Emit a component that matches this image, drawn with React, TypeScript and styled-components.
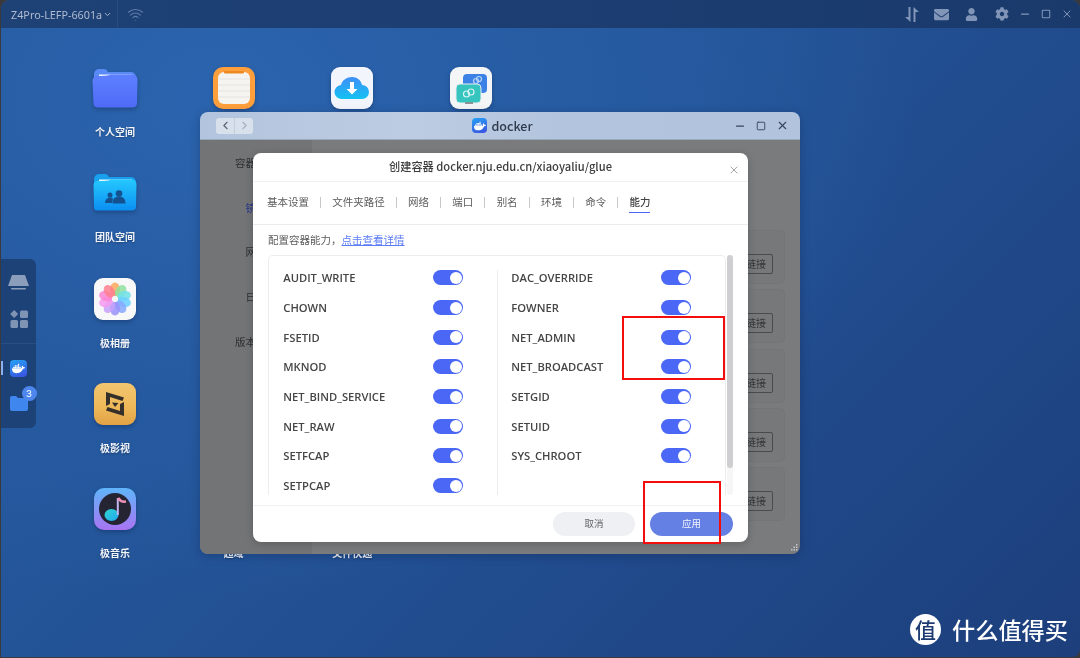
import React from "react";
import styled, { createGlobalStyle } from "styled-components";
import { SiDocker } from "react-icons/si";
import { FaCog, FaEnvelope, FaUser } from "react-icons/fa";
import { Wifi, ChevronDown, ChevronLeft, ChevronRight, Minus, Square, X } from "lucide-react";

const Global = createGlobalStyle`
  html, body { margin: 0; padding: 0; background: #3a3a3c; }
  * { box-sizing: border-box; }
  body { font-family: "Noto Sans CJK SC", "Noto Sans", sans-serif; }
`;

const Screen = styled.div`
  position: relative;
  width: 1080px;
  height: 658px;
  overflow: hidden;
  padding: 0 0 1px 1px;
  background: #3a3a3c;
  filter: blur(0.35px);
`;
const Panel = styled.div`
  position: relative;
  height: 100%;
  display: flex;
  flex-direction: column;
  border-radius: 9px 9px 8px 0;
  overflow: hidden;
  background: radial-gradient(ellipse 700px 500px at 20% 15%, #2b64ae 0%, #265aa0 60%, transparent 100%),
    linear-gradient(135deg, #2860a8 0%, #214d8f 60%, #1d3f7c 100%);
`;
const TopBar = styled.div`
  height: 28px;
  flex: none;
  display: flex;
  align-items: center;
  background: linear-gradient(90deg, #1e4176, #1a3a6c);
  color: #aebbd0;
`;
const HostSection = styled.div`
  width: 117px;
  height: 100%;
  display: flex;
  align-items: center;
  gap: 1px;
  padding-left: 10px;
  font: 400 10.8px "Noto Sans", sans-serif;
  border-right: 1px solid #2a4c80;
  white-space: nowrap;
`;
const WifiSlot = styled.div`
  margin-left: 9px;
  display: flex;
  color: #5d7ca8;
`;
const TopActions = styled.div`
  margin-left: auto;
  display: flex;
  gap: 9px;
  margin-right: 2px;
  color: #8095b7;
`;
const WindowActions = styled.div`
  display: flex;
  margin-right: 3px;
  color: #8095b7;
`;
const TopSlot = styled.div`
  width: 21px;
  height: 21px;
  display: flex;
  align-items: center;
  justify-content: center;
`;
const Desktop = styled.div`
  flex: 1;
  display: grid;
  grid-template-columns: repeat(4, 118.7px);
  grid-template-rows: repeat(5, 105.25px);
  padding: 39px 0 0 54.6px;
`;
const Shortcut = styled.div<{ $col: number; $row: number }>`
  grid-column: ${(p) => p.$col};
  grid-row: ${(p) => p.$row};
  display: flex;
  flex-direction: column;
  align-items: center;
`;
const ShortcutIcon = styled.div`
  width: 46px;
  height: 42px;
  display: flex;
  justify-content: center;
  filter: drop-shadow(0 2px 2px rgba(10, 30, 70, 0.35));
`;
const ShortcutLabel = styled.div`
  margin-top: 17px;
  font-size: 10px;
  line-height: 12px;
  font-weight: 700;
  color: #f1f4f9;
  text-shadow: 0 1px 2px rgba(0, 0, 0, 0.3);
`;

const Dock = styled.div`
  position: absolute;
  left: 0;
  top: 259px;
  width: 35px;
  height: 169px;
  border-radius: 0 6px 6px 0;
  background: #1d4278;
  display: flex;
  flex-direction: column;
  align-items: center;
`;
const DockSlot = styled.div<{ $h: number }>`
  position: relative;
  height: ${(p) => p.$h}px;
  display: flex;
  align-items: center;
  justify-content: center;
`;
const DockRule = styled.div`
  width: 100%;
  height: 1px;
  margin-top: 13px;
  background: #2a4d82;
`;
const DockBadge = styled.span`
  position: absolute;
  top: -6px;
  right: -9px;
  width: 15px;
  height: 15px;
  border-radius: 50%;
  background: #4d86ec;
  color: #e8f0ff;
  font: 500 9.5px/15px "Inter", sans-serif;
  text-align: center;
`;
const DockMarker = styled.span`
  position: absolute;
  left: 0;
  top: 102px;
  width: 2px;
  height: 14px;
  background: #8fb0ee;
`;
const DockerTile = styled.div<{ $size: number }>`
  width: ${(p) => p.$size}px;
  height: ${(p) => p.$size}px;
  border-radius: 4px;
  background: linear-gradient(160deg, #25a3f5, #3b4de0);
  color: #fff;
  display: flex;
  align-items: center;
  justify-content: center;
`;

const Win = styled.div`
  position: absolute;
  left: 199px;
  top: 112px;
  width: 600px;
  height: 442px;
  border-radius: 8px;
  overflow: hidden;
  display: flex;
  flex-direction: column;
  box-shadow: 0 2px 10px rgba(8, 20, 50, 0.25);
`;
const WinBar = styled.div`
  height: 28px;
  flex: none;
  display: grid;
  grid-template-columns: 1fr auto 1fr;
  align-items: center;
  padding: 0 11px 0 16px;
  background: linear-gradient(90deg, #b3c4de, #bccce2 35%, #b3c4de 60%, #b2c3dd);
  border-bottom: 1px solid #9aa8bc;
`;
const NavGroup = styled.div`
  width: 37px;
  height: 16px;
  display: flex;
  background: #d8e0ec;
  border-radius: 3px;
  color: #5b6572;
`;
const NavButton = styled.div<{ $muted?: boolean }>`
  flex: 1;
  display: flex;
  align-items: center;
  justify-content: center;
  color: ${(p) => (p.$muted ? "#a5afbd" : "#59626f")};
  & + & { border-left: 1px solid #c3cddc; }
`;
const WinTitle = styled.div`
  display: flex;
  align-items: center;
  gap: 4px;
  font: 500 12.5px "Noto Sans CJK SC", "Noto Sans", sans-serif;
  color: #2f3a4c;
`;
const WinControls = styled.div`
  justify-self: end;
  display: flex;
  gap: 7px;
  color: #36455c;
`;
const WinControl = styled.div`
  width: 14px;
  height: 14px;
  display: flex;
  align-items: center;
  justify-content: center;
`;
const WinBody = styled.div`
  flex: 1;
  display: flex;
  background: #7a7b7d;
`;
const Sidebar = styled.div`
  width: 112px;
  background: #737476;
`;
const SideItem = styled.div<{ $active?: boolean }>`
  height: 44.7px;
  display: flex;
  align-items: center;
  justify-content: center;
  font-size: 10.5px;
  color: ${(p) => (p.$active ? "#28368a" : "#2e2f31")};
`;
const CardList = styled.div`
  flex: 1;
  display: flex;
  flex-direction: column;
  gap: 5.3px;
  padding: 90px 15px 0 0;
`;
const Card = styled.div`
  height: 54px;
  display: flex;
  justify-content: flex-end;
  align-items: flex-end;
  padding: 0 11px 9px 0;
  background: #77787a;
  border: 1px solid #747577;
  border-radius: 5px;
`;
const LinkButton = styled.div`
  width: 60px;
  height: 20px;
  border: 1px solid #4a4b4d;
  border-radius: 2px;
  font-size: 10px;
  line-height: 18px;
  padding-left: 32px;
  color: #343537;
  white-space: nowrap;
`;
const Grip = styled.svg`
  position: absolute;
  right: 2px;
  bottom: 3px;
`;

const Modal = styled.div`
  position: absolute;
  left: 53px;
  top: 41px;
  width: 495px;
  height: 389px;
  border-radius: 8px;
  background: #fff;
  display: flex;
  flex-direction: column;
  box-shadow: 0 2px 8px rgba(0, 0, 0, 0.2);
`;
const ModalHeader = styled.div`
  position: relative;
  height: 29px;
  flex: none;
  display: flex;
  align-items: center;
  justify-content: center;
  padding-bottom: 2px;
  border-bottom: 1px solid #f0f0f2;
  font-size: 11.2px;
  font-weight: 500;
  color: #3c3c3c;
`;
const ModalClose = styled.div`
  position: absolute;
  right: 8px;
  top: 11px;
  color: #9a9a9a;
  display: flex;
`;
const Tabs = styled.div`
  height: 43px;
  flex: none;
  display: flex;
  align-items: center;
  gap: 11.15px;
  padding: 0 0 2px 14px;
  border-bottom: 1px solid #ececee;
`;
const Tab = styled.div<{ $active?: boolean }>`
  position: relative;
  font-size: 10.5px;
  line-height: 16px;
  color: ${(p) => (p.$active ? "#444" : "#5c5c5c")};
  font-weight: ${(p) => (p.$active ? 500 : 400)};
  &::after {
    content: "";
    display: ${(p) => (p.$active ? "block" : "none")};
    position: absolute;
    left: 0;
    right: 0;
    bottom: -3px;
    height: 1.5px;
    background: #4a67f5;
  }
`;
const TabRule = styled.div`
  width: 1px;
  height: 11px;
  background: #c9c9cc;
`;
const Intro = styled.div`
  height: 30px;
  flex: none;
  display: flex;
  align-items: center;
  padding: 0 0 2px 15px;
  font-size: 10.5px;
  color: #5c5c5c;
`;
const IntroLink = styled.span`
  color: #5a7cf5;
  text-decoration: underline;
`;
const ListWrap = styled.div`
  height: 240px;
  flex: none;
  display: flex;
  gap: 1px;
  padding-left: 15px;
`;
const ListBox = styled.div`
  width: 458px;
  display: flex;
  overflow: hidden;
  border: 1px solid #ededef;
  border-bottom: none;
  border-radius: 5px 5px 0 0;
  padding-top: 7px;
`;
const Column = styled.div<{ $divided?: boolean }>`
  position: relative;
  width: 228.8px;
  padding-left: 14.3px;
  &::before {
    content: "";
    display: ${(p) => (p.$divided ? "block" : "none")};
    position: absolute;
    left: 0;
    top: 7px;
    bottom: 0;
    width: 1px;
    background: #ededef;
  }
`;
const CapRow = styled.div`
  width: 180px;
  height: 29.7px;
  display: flex;
  align-items: center;
  justify-content: space-between;
`;
const CapName = styled.span`
  font: 600 11.2px "Open Sans", "Noto Sans", sans-serif;
  color: #454545;
`;
const Toggle = styled.span`
  position: relative;
  width: 30px;
  height: 15px;
  border-radius: 8px;
  background: #4a67f5;
  &::after {
    content: "";
    position: absolute;
    right: 1.5px;
    top: 1.5px;
    width: 12px;
    height: 12px;
    border-radius: 50%;
    background: #fff;
  }
`;
const Track = styled.div`
  position: relative;
  width: 6px;
  background: #f6f6f7;
  border-radius: 3px;
`;
const Thumb = styled.div`
  height: 213px;
  border-radius: 3px;
  background: #cfcfd1;
`;
const Footer = styled.div`
  flex: 1;
  display: flex;
  justify-content: flex-end;
  gap: 15px;
  margin-top: 10px;
  padding: 6px 15px 0 0;
  border-top: 1px solid #f0f0f2;
`;
const Pill = styled.div<{ $primary?: boolean }>`
  width: ${(p) => (p.$primary ? 83 : 82)}px;
  height: 24px;
  border-radius: 12px;
  text-align: center;
  font-size: 9.5px;
  line-height: 23px;
  background: ${(p) => (p.$primary ? "#6480e4" : "#eff0f4")};
  color: ${(p) => (p.$primary ? "#f2f4fd" : "#666")};
`;
const Callout = styled.div<{ $x: number; $y: number; $w: number; $h: number }>`
  position: absolute;
  left: ${(p) => p.$x}px;
  top: ${(p) => p.$y}px;
  width: ${(p) => p.$w}px;
  height: ${(p) => p.$h}px;
  border: 2px solid #f30d0d;
`;
const Watermark = styled.div`
  position: absolute;
  right: 12px;
  bottom: 13px;
  display: flex;
  align-items: center;
  gap: 11px;
  color: #fff;
`;
const MarkCircle = styled.div`
  width: 31px;
  height: 31px;
  border-radius: 50%;
  background: #fff;
  color: #1d3a72;
  font-size: 21px;
  font-weight: 500;
  line-height: 30px;
  text-align: center;
`;
const MarkText = styled.div`
  font-size: 23.2px;
  font-weight: 500;
  line-height: 31px;
`;

const FolderIcon = () => (
  <svg width="46" height="42" viewBox="0 0 46 42">
    <defs>
      <linearGradient id="pf" x1="0" y1="0" x2="0" y2="1">
        <stop offset="0" stopColor="#5d80ff" />
        <stop offset="1" stopColor="#4f6bf6" />
      </linearGradient>
    </defs>
    <path d="M2 7a5 5 0 0 1 5-5h5c2 0 3 1 4 3h23a5 5 0 0 1 5 5v14H2z" fill="#5a8af6" />
    <path d="M7 7.500h33v6H7z" fill="#eef3ff" />
    <path d="M.5 14c0-3 2-5 5-5 7 0 10-.5 14-1.500h20.500c3 0 5.500 2 5.500 5l-.5 24c0 2.500-2 4-4.500 4H6c-2.500 0-4.500-1.500-4.500-4z" fill="url(#pf)" />
  </svg>
);
const TeamIcon = () => (
  <svg width="46" height="42" viewBox="0 0 46 42">
    <defs>
      <linearGradient id="tf" x1="0" y1="0" x2="0" y2="1">
        <stop offset="0" stopColor="#25c8ff" />
        <stop offset="1" stopColor="#0b8ff2" />
      </linearGradient>
    </defs>
    <path d="M2 7a5 5 0 0 1 5-5h6c2 0 3 1 4 3h22a5 5 0 0 1 5 5v14H2z" fill="#18a0ee" />
    <path d="M7 7.500h33v6H7z" fill="#e8f6ff" />
    <path d="M1.500 13c0-2 1.500-4 4-4 8 0 10 0 14-1.500h20c3 0 5 2 5 5l-.5 22c0 3-2 4-4 4H6c-3 0-4-1-4-4z" fill="url(#tf)" />
    <circle cx="18" cy="23" r="2.500" fill="#15508f" />
    <path d="M13 31c0-3 2-5.500 5-5.500 1.500 0 2.500.5 3 1L20 31z" fill="#15508f" />
    <circle cx="27" cy="21.500" r="3.300" fill="#15508f" />
    <path d="M20.500 31.500c0-4.500 2.500-7 6.500-7s6.500 2.500 6.500 7z" fill="#15508f" />
  </svg>
);
const NotesIcon = () => (
  <svg width="42" height="42" viewBox="0 0 42 42">
    <rect width="42" height="42" rx="10" fill="#ff9f3c" />
    <rect x="5" y="5" width="32" height="32" rx="6" fill="#f6f4f1" />
    <path d="M5 12h32M5 18h32M5 24h32M5 30h32" stroke="#e6e4e0" strokeWidth="1" />
    <rect x="11" y="4" width="20" height="2.500" rx="1.200" fill="#ec8a20" />
  </svg>
);
const CloudIcon = () => (
  <svg width="42" height="42" viewBox="0 0 42 42">
    <defs>
      <linearGradient id="cl" x1="0" y1="0" x2="0" y2="1">
        <stop offset="0" stopColor="#3f8ff7" />
        <stop offset="1" stopColor="#12c2f2" />
      </linearGradient>
    </defs>
    <rect width="42" height="42" rx="9" fill="#f2f5fc" />
    <path d="M11 32a7 7 0 0 1-1-14c1-5 6-8 11-8 5 0 9 3 10 8a7 7 0 0 1 0 14z" fill="url(#cl)" />
    <path d="M19 15h4v7h3.500L21 27.500 15.500 22H19z" fill="#fff" />
  </svg>
);
const LinkIcon = () => (
  <svg width="42" height="42" viewBox="0 0 42 42" fill="none">
    <rect width="42" height="42" rx="9" fill="#f4f5f6" />
    <rect x="13" y="7" width="24" height="19" rx="4" fill="#3c82e6" />
    <rect x="6" y="17" width="25" height="19" rx="4" fill="#35c4be" stroke="#e8eef0" strokeWidth="1" />
    <path d="M15 36h8" stroke="#8b9294" strokeWidth="2" />
    <circle cx="16.500" cy="27" r="3" stroke="#d8f4f2" strokeWidth="1.200" />
    <circle cx="21" cy="25" r="3" stroke="#d8f4f2" strokeWidth="1.200" />
    <circle cx="26" cy="14" r="2.500" stroke="#b7d4f8" strokeWidth="1.200" />
    <circle cx="29" cy="12" r="2.500" stroke="#b7d4f8" strokeWidth="1.200" />
  </svg>
);
const petals = ["#ffa85c", "#8fe0a0", "#6fe0e8", "#6cd0ff", "#86a8ff", "#9a92fa", "#c8a0f8", "#f49af0", "#fb84d4", "#ff7f8f"];
const PhotosIcon = () => (
  <svg width="42" height="42" viewBox="0 0 42 42">
    <rect width="42" height="42" rx="9" fill="#f8f8f9" />
    {petals.map((c, i) => (
      <ellipse key={c} cx="21" cy="11.500" rx="5" ry="7" fill={c} opacity="0.85" transform={`rotate(${i * 36} 21 21)`} />
    ))}
    <circle cx="21" cy="21" r="3" fill="#f8f8f9" />
  </svg>
);
const VideoIcon = () => (
  <svg width="42" height="42" viewBox="0 0 42 42">
    <defs>
      <linearGradient id="vd" x1="0" y1="0" x2="0" y2="1">
        <stop offset="0" stopColor="#f2c66f" />
        <stop offset="0.55" stopColor="#eeb95a" />
        <stop offset="1" stopColor="#e2a244" />
      </linearGradient>
    </defs>
    <rect width="42" height="42" rx="9" fill="url(#vd)" />
    <path d="M12 9l18 5.500-1.500 3.500-12.500-4v7l-4 2zM30 33l-18-5.500 1.500-3.500 12.500 4v-7l4-2z" fill="#35302a" />
    <path d="M18 19.500l6.500.5-3.500 4z" fill="#35302a" />
  </svg>
);
const MusicIcon = () => (
  <svg width="42" height="42" viewBox="0 0 42 42" fill="none">
    <defs>
      <linearGradient id="mb" x1="0" y1="0" x2="0" y2="1">
        <stop offset="0" stopColor="#5fb5fb" />
        <stop offset="1" stopColor="#a874f2" />
      </linearGradient>
      <linearGradient id="mn" x1="0" y1="0" x2="1" y2="1">
        <stop offset="0" stopColor="#2fd5d0" />
        <stop offset="1" stopColor="#22a8f0" />
      </linearGradient>
    </defs>
    <rect width="42" height="42" rx="10" fill="url(#mb)" />
    <circle cx="21" cy="21" r="16" fill="#252433" />
    <ellipse cx="17.500" cy="27" rx="7" ry="6" fill="url(#mn)" />
    <path d="M23.800 27V10" stroke="#c6b4f0" strokeWidth="2" />
    <path d="M24 10c2 3 5 4 8 3.500" stroke="#f08fb4" strokeWidth="2.500" />
  </svg>
);
const BlankIcon = () => <svg width="42" height="42" viewBox="0 0 42 42" />;

const TransferIcon = () => (
  <svg width="14" height="15" viewBox="0 0 14 15" fill="currentColor">
    <path d="M3.500 0h2v15L0 10h3.500z" />
    <path d="M8.500 15h2V5H14L8.500 0z" />
  </svg>
);
const DiskIcon = () => (
  <svg width="21" height="16" viewBox="0 0 21 16" fill="#8a9dbb">
    <path d="M4 0h13l4 11H0z" />
    <rect x="3" y="13" width="15" height="1.500" rx="0.700" />
  </svg>
);
const AppsIcon = () => (
  <svg width="18" height="18" viewBox="0 0 18 18" fill="#7f93b3">
    <path d="M4.200 0l4 4-4 4-4-4z" />
    <rect x="10" y="0.500" width="8" height="7.500" rx="1.500" />
    <rect x="0.500" y="10" width="7.500" height="8" rx="1.500" />
    <rect x="10" y="10" width="8" height="8" rx="1.500" />
  </svg>
);
const DockFolder = () => (
  <svg width="18" height="16" viewBox="0 0 18 16">
    <path d="M0 3a2 2 0 0 1 2-2h4l2 2h8a2 2 0 0 1 2 2v9a2 2 0 0 1-2 2H2a2 2 0 0 1-2-2z" fill="#3f87ee" />
  </svg>
);

const left = ["AUDIT_WRITE", "CHOWN", "FSETID", "MKNOD", "NET_BIND_SERVICE", "NET_RAW", "SETFCAP", "SETPCAP"];
const right = ["DAC_OVERRIDE", "FOWNER", "NET_ADMIN", "NET_BROADCAST", "SETGID", "SETUID", "SYS_CHROOT"];
const tabs = ["基本设置", "文件夹路径", "网络", "端口", "别名", "环境", "命令", "能力"];
const shortcuts = [
  { col: 1, row: 1, label: "个人空间", icon: <FolderIcon /> },
  { col: 1, row: 2, label: "团队空间", icon: <TeamIcon /> },
  { col: 1, row: 3, label: "极相册", icon: <PhotosIcon /> },
  { col: 1, row: 4, label: "极影视", icon: <VideoIcon /> },
  { col: 1, row: 5, label: "极音乐", icon: <MusicIcon /> },
  { col: 2, row: 1, label: "", icon: <NotesIcon /> },
  { col: 3, row: 1, label: "", icon: <CloudIcon /> },
  { col: 4, row: 1, label: "", icon: <LinkIcon /> },
  { col: 2, row: 5, label: "超域", icon: <BlankIcon /> },
  { col: 3, row: 5, label: "文件快递", icon: <BlankIcon /> },
];
const sideItems = ["容器列表", "镜像", "网络", "日志", "版本信息"];

export default function App() {
  return (
    <Screen>
      <Global />
      <Panel>
        <TopBar>
          <HostSection>
            Z4Pro-LEFP-6601a
            <ChevronDown size={9} strokeWidth={2.500} />
          </HostSection>
          <WifiSlot>
            <Wifi size={17} strokeWidth={1.500} />
          </WifiSlot>
          <TopActions>
            <TopSlot><TransferIcon /></TopSlot>
            <TopSlot><FaEnvelope size={15} /></TopSlot>
            <TopSlot><FaUser size={13} /></TopSlot>
            <TopSlot><FaCog size={14} /></TopSlot>
          </TopActions>
          <WindowActions>
            <TopSlot><Minus size={12} strokeWidth={2.500} /></TopSlot>
            <TopSlot><Square size={10} strokeWidth={2.500} /></TopSlot>
            <TopSlot><X size={12} strokeWidth={2} /></TopSlot>
          </WindowActions>
        </TopBar>
        <Desktop>
          {shortcuts.map((s) => (
            <Shortcut key={`${s.col}-${s.row}`} $col={s.col} $row={s.row}>
              <ShortcutIcon>{s.icon}</ShortcutIcon>
              <ShortcutLabel>{s.label}</ShortcutLabel>
            </Shortcut>
          ))}
        </Desktop>
        <Dock>
          <DockMarker />
          <DockSlot $h={48}><DiskIcon /></DockSlot>
          <DockSlot $h={23}><AppsIcon /></DockSlot>
          <DockRule />
          <DockSlot $h={48}>
            <DockerTile $size={17}><SiDocker size={13} /></DockerTile>
          </DockSlot>
          <DockSlot $h={22}>
            <DockFolder />
            <DockBadge>3</DockBadge>
          </DockSlot>
        </Dock>
        <Win>
          <WinBar>
            <NavGroup>
              <NavButton><ChevronLeft size={13} strokeWidth={2} /></NavButton>
              <NavButton $muted><ChevronRight size={13} strokeWidth={2} /></NavButton>
            </NavGroup>
            <WinTitle>
              <DockerTile $size={15}><SiDocker size={12} /></DockerTile>
              docker
            </WinTitle>
            <WinControls>
              <WinControl><Minus size={12} strokeWidth={2.500} /></WinControl>
              <WinControl><Square size={10} strokeWidth={2.200} /></WinControl>
              <WinControl><X size={13} strokeWidth={2} /></WinControl>
            </WinControls>
          </WinBar>
          <WinBody>
            <Sidebar>
              {sideItems.map((t, i) => (
                <SideItem key={t} $active={i === 1}>{t}</SideItem>
              ))}
            </Sidebar>
            <CardList>
              {[0, 1, 2, 3, 4].map((i) => (
                <Card key={i}><LinkButton>链接</LinkButton></Card>
              ))}
            </CardList>
          </WinBody>
          <Grip width="7" height="7" viewBox="0 0 7 7" fill="#c4c6ca">
            <rect x="5" y="0" width="1.500" height="1.500" />
            <rect x="2.500" y="2.500" width="1.500" height="1.500" />
            <rect x="5" y="2.500" width="1.500" height="1.500" />
            <rect x="0" y="5" width="1.500" height="1.500" />
            <rect x="2.500" y="5" width="1.500" height="1.500" />
            <rect x="5" y="5" width="1.500" height="1.500" />
          </Grip>
          <Modal>
            <ModalHeader>
              创建容器 docker.nju.edu.cn/xiaoyaliu/glue
              <ModalClose><X size={12} strokeWidth={1.800} /></ModalClose>
            </ModalHeader>
            <Tabs>
              {tabs.map((t, i) => (
                <React.Fragment key={t}>
                  {i > 0 && <TabRule />}
                  <Tab $active={t === "能力"}>{t}</Tab>
                </React.Fragment>
              ))}
            </Tabs>
            <Intro>
              配置容器能力，<IntroLink>点击查看详情</IntroLink>
            </Intro>
            <ListWrap>
              <ListBox>
                <Column>
                  {left.map((n) => (
                    <CapRow key={n}><CapName>{n}</CapName><Toggle /></CapRow>
                  ))}
                </Column>
                <Column $divided>
                  {right.map((n) => (
                    <CapRow key={n}><CapName>{n}</CapName><Toggle /></CapRow>
                  ))}
                </Column>
              </ListBox>
              <Track><Thumb /></Track>
            </ListWrap>
            <Footer>
              <Pill>取消</Pill>
              <Pill $primary>应用</Pill>
            </Footer>
          </Modal>
        </Win>
      </Panel>
      <Callout $x={622} $y={316} $w={103} $h={64} />
      <Callout $x={643} $y={481} $w={78} $h={63} />
      <Watermark>
        <MarkCircle>值</MarkCircle>
        <MarkText>什么值得买</MarkText>
      </Watermark>
    </Screen>
  );
}
